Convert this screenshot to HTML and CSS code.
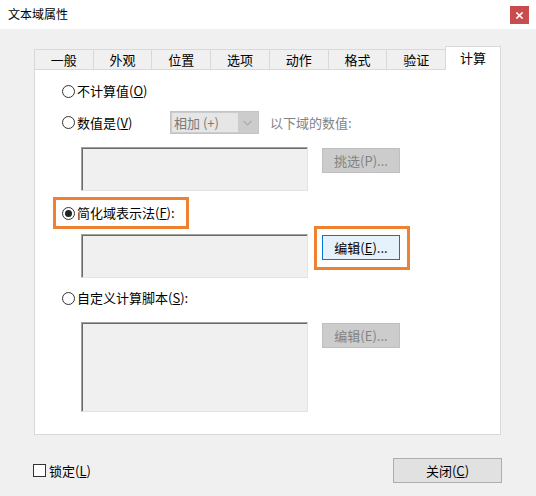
FILE: index.html
```html
<!DOCTYPE html>
<html lang="zh-CN">
<head>
<meta charset="utf-8">
<title>文本域属性</title>
<link rel="stylesheet" href="styles.css">
</head>
<body>
<div class="window">
  <div class="titlebar">
    <span class="title">文本域属性</span>
    <span class="close-x">
      <svg width="7" height="7" viewBox="0 0 7 7"><path d="M1 1L6 6M6 1L1 6" stroke="#fff" stroke-width="1.6" stroke-linecap="square"/></svg>
    </span>
  </div>

  <div class="tabs">
    <div class="tab">一般</div>
    <div class="tab">外观</div>
    <div class="tab">位置</div>
    <div class="tab">选项</div>
    <div class="tab">动作</div>
    <div class="tab">格式</div>
    <div class="tab">验证</div>
    <div class="tab tab-active">计算</div>
  </div>

  <div class="panel">
    <div class="row row-first">
      <span class="radio"></span><span class="label">不计算值(<u>O</u>)</span>
    </div>

    <div class="row row-value">
      <span class="radio"></span><span class="label label-fixed">数值是(<u>V</u>)</span>
      <div class="combo">
        <span class="combo-text">相加 (+)</span>
        <span class="combo-arrow">
          <svg width="9" height="6" viewBox="0 0 9 6"><path d="M0.5 0.8L4.5 4.8L8.5 0.8" fill="none" stroke="#a6a6a6" stroke-width="1.1"/></svg>
        </span>
      </div>
      <span class="label disabled-text">以下域的数值:</span>
    </div>

    <div class="field-row field-row-pick">
      <div class="textbox textbox-short"></div>
      <div class="btn btn-disabled">挑选(P)...</div>
    </div>

    <div class="row row-annot">
      <span class="radio radio-checked"></span><span class="label">简化域表示法(<u>F</u>):</span>
    </div>

    <div class="field-row field-row-edit">
      <div class="textbox textbox-short textbox-offset"></div>
      <div class="annot-box">
        <div class="btn btn-focus">编辑(<u>E</u>)...</div>
      </div>
    </div>

    <div class="row row-script">
      <span class="radio"></span><span class="label">自定义计算脚本(<u>S</u>):</span>
    </div>

    <div class="field-row field-row-script">
      <div class="textbox textbox-tall"></div>
      <div class="btn btn-disabled">编辑(E)...</div>
    </div>
  </div>

  <div class="footer">
    <div class="check-wrap">
      <span class="checkbox"></span><span class="label">锁定(<u>L</u>)</span>
    </div>
    <div class="btn btn-close">关闭(<u>C</u>)</div>
  </div>
</div>
</body>
</html>
```

FILE: styles.css
```css
* {
  box-sizing: border-box;
}

html, body {
  margin: 0;
  padding: 0;
}

body {
  width: 536px;
  height: 496px;
  overflow: hidden;
  background: #f0f0f0;
  font-family: "Noto Sans CJK SC", "Microsoft YaHei", sans-serif;
  font-size: 13px;
  color: #000;
}

u {
  text-decoration: underline;
  text-underline-offset: 1px;
}

.window {
  width: 536px;
  height: 496px;
}

/* Title bar */
.titlebar {
  height: 29px;
  background: #fff;
  display: flex;
  justify-content: space-between;
  align-items: flex-start;
  padding: 0 7px 0 8px;
}

.title {
  font-size: 12px;
  line-height: 28px;
}

.close-x {
  width: 19px;
  height: 18px;
  margin-top: 6px;
  background: #c94b4b;
  display: flex;
  align-items: center;
  justify-content: center;
}

/* Tabs */
.tabs {
  display: flex;
  align-items: flex-end;
  height: 23px;
  margin: 17px 35px 0 34px;
}

.tab {
  flex: 1;
  height: 20px;
  border: 1px solid #d9d9d9;
  border-bottom: 0;
  margin-left: -1px;
  background: #f0f0f0;
  text-align: center;
  line-height: 19px;
}

.tab:first-child {
  margin-left: 0;
}

.tab-active {
  flex: 0 0 56px;
  height: 24px;
  margin-bottom: -1px;
  background: #fff;
  line-height: 21px;
  position: relative;
  z-index: 1;
}

/* Panel */
.panel {
  height: 366px;
  margin: 0 35px 0 34px;
  background: #fff;
  border: 1px solid #d9d9d9;
}

.row {
  display: flex;
  align-items: center;
  height: 22px;
  padding-left: 27px;
  white-space: nowrap;
}

.row-first {
  margin-top: 10px;
}

.row-value {
  margin-top: 9px;
  height: 23px;
}

.row-annot {
  margin-top: 6px;
  margin-left: 18px;
  width: 136px;
  height: 32px;
  padding-left: 6px;
  border: 3px solid #ee8132;
}

.row-script {
  margin-top: 9px;
}

.radio {
  width: 13px;
  height: 13px;
  border: 1px solid #333;
  border-radius: 50%;
  background: #fff;
  flex: none;
  display: flex;
  align-items: center;
  justify-content: center;
}

.radio-checked::after {
  content: "";
  width: 7px;
  height: 7px;
  border-radius: 50%;
  background: #222;
}

.label {
  margin-left: 2px;
  line-height: 18px;
}

.label-fixed {
  width: 93px;
}

.disabled-text {
  color: #838383;
  margin-left: 11px;
}

/* Combo box (disabled) */
.combo {
  width: 89px;
  height: 23px;
  background: #cccccc;
  border: 1px solid #c4c4c4;
  display: flex;
  align-items: stretch;
  padding: 1px;
}

.combo-text {
  flex: 1;
  background: #e6e6e6;
  color: #7a7a7a;
  padding-left: 2px;
  line-height: 19px;
}

.combo-arrow {
  width: 19px;
  display: flex;
  align-items: center;
  justify-content: center;
}

/* Text boxes */
.field-row {
  display: flex;
  align-items: flex-start;
  margin-left: 46px;
}

.field-row-pick {
  margin-top: 13px;
}

.field-row-edit {
  margin-top: -3px;
}

.field-row-script {
  margin-top: 13px;
}

.textbox {
  width: 227px;
  background: #f0f0f0;
  border: 1px solid;
  border-color: #a0a0a0 #e3e3e3 #e3e3e3 #a0a0a0;
  box-shadow: inset 1px 1px 0 #6a6a6a;
}

.textbox-short {
  height: 44px;
}

.textbox-offset {
  margin-top: 8px;
}

.textbox-tall {
  height: 90px;
}

/* Buttons */
.btn {
  width: 78px;
  height: 25px;
  display: flex;
  align-items: center;
  justify-content: center;
  line-height: 18px;
  border: 1px solid #adadad;
  background: #e1e1e1;
}

.field-row > .btn {
  margin-left: 14px;
  margin-top: 1px;
}

.btn-disabled {
  background: #cccccc;
  border-color: #bfbfbf;
  color: #838383;
}

.btn-focus {
  background: #e5f1fb;
  border-color: #0078d7;
}

.annot-box {
  width: 96px;
  height: 44px;
  margin-left: 6px;
  border: 3px solid #ee8132;
  padding: 6px 0 0 5px;
}

/* Footer */
.footer {
  display: flex;
  justify-content: space-between;
  align-items: center;
  height: 25px;
  margin: 23px 34px 0 33px;
}

.check-wrap {
  display: flex;
  align-items: center;
}

.checkbox {
  width: 13px;
  height: 13px;
  border: 1px solid #333;
  background: #fff;
}

.check-wrap .label {
  margin-left: 3px;
}

.btn-close {
  width: 109px;
}
```
